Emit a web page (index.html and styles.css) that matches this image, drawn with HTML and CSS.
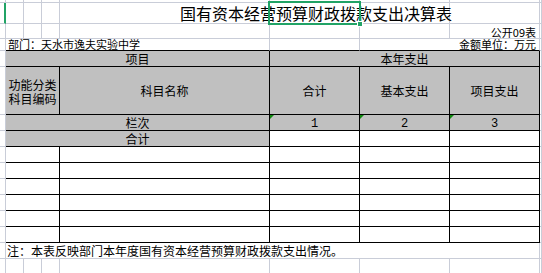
FILE: index.html
```html
<!DOCTYPE html>
<html lang="zh-CN">
<head>
<meta charset="utf-8">
<title>国有资本经营预算财政拨款支出决算表</title>
<link rel="stylesheet" href="styles.css">
</head>
<body>
<div class="sheet">
  <!-- r0 -->
  <div class="c"></div><div class="c"></div><div class="c"></div><div class="c"></div><div class="c"></div><div class="c"></div><div class="c"></div><div class="c"></div><div class="c"></div>
  <!-- r1 title -->
  <div class="c sel-row"></div><div class="c"></div><div class="c"></div><div class="c"></div>
  <div class="c s3 title">国有资本经营预算财政拨款支出决算表</div>
  <div class="c"></div><div class="c"></div>
  <!-- r2 -->
  <div class="c"></div><div class="c"></div><div class="c"></div><div class="c"></div><div class="c"></div><div class="c"></div><div class="c"></div>
  <div class="c small right">公开09表</div><div class="c"></div>
  <!-- r3 -->
  <div class="c"></div>
  <div class="c s4 small top-edge left">部门：天水市逸夫实验中学</div>
  <div class="c top-edge"></div>
  <div class="c s2 small top-edge right">金额单位：万元</div>
  <div class="c"></div>
  <!-- r4 header -->
  <div class="c"></div>
  <div class="t g s4 mid">项目</div>
  <div class="t g s3 mid">本年支出</div>
  <div class="c"></div>
  <!-- r5 header -->
  <div class="c"></div>
  <div class="t g s3 mid two">功能分类<br>科目编码</div>
  <div class="t g mid">科目名称</div>
  <div class="t g mid">合计</div>
  <div class="t g mid">基本支出</div>
  <div class="t g mid">项目支出</div>
  <div class="c"></div>
  <!-- r6 栏次 -->
  <div class="c"></div>
  <div class="t g s4 mid">栏次</div>
  <div class="t g mid num tri">1</div>
  <div class="t g mid num tri">2</div>
  <div class="t g mid num tri">3</div>
  <div class="c"></div>
  <!-- r7 合计 -->
  <div class="c"></div>
  <div class="t g s4 mid">合计</div>
  <div class="t"></div><div class="t"></div><div class="t"></div>
  <div class="c"></div>
  <!-- r8-r13 data rows -->
  <div class="c"></div><div class="t s3"></div><div class="t"></div><div class="t"></div><div class="t"></div><div class="t"></div><div class="c"></div>
  <div class="c"></div><div class="t s3"></div><div class="t"></div><div class="t"></div><div class="t"></div><div class="t"></div><div class="c"></div>
  <div class="c"></div><div class="t s3"></div><div class="t"></div><div class="t"></div><div class="t"></div><div class="t"></div><div class="c"></div>
  <div class="c"></div><div class="t s3"></div><div class="t"></div><div class="t"></div><div class="t"></div><div class="t"></div><div class="c"></div>
  <div class="c"></div><div class="t s3"></div><div class="t"></div><div class="t"></div><div class="t"></div><div class="t"></div><div class="c"></div>
  <div class="c"></div><div class="t s3"></div><div class="t"></div><div class="t"></div><div class="t"></div><div class="t"></div><div class="c"></div>
  <!-- r14 note -->
  <div class="c"></div>
  <div class="c s7 note left">注：本表反映部门本年度国有资本经营预算财政拨款支出情况。</div>
  <div class="c"></div>
  <!-- r15 -->
  <div class="c"></div><div class="c"></div><div class="c"></div><div class="c"></div><div class="c"></div><div class="c"></div><div class="c"></div><div class="c"></div><div class="c"></div>

  <div class="selection"><span class="handle"></span></div>
</div>
</body>
</html>
```
FILE: styles.css
```css
* { box-sizing: border-box; }
html, body { margin: 0; padding: 0; background: #fff; }
body {
  font-family: "Noto Sans CJK SC", "Liberation Sans", sans-serif;
  color: #000;
}
.sheet {
  position: relative;
  width: 542px;
  height: 273px;
  overflow: hidden;
  display: grid;
  grid-template-columns: 6px 18px 18px 18px 210px 90px 90px 90px 1fr;
  grid-template-rows: 3px 21px 15px 12px 16px 48px 16px 16px 16px 16px 16px 16px 16px 16px 16px 30px;
  background: #fff;
}
.c {
  border-right: 1px solid #c9cdd8;
  border-bottom: 1px solid #c9cdd8;
  font-size: 12px;
  white-space: nowrap;
  min-width: 0;
}
.t {
  position: relative;
  border-right: 1px solid #000;
  border-bottom: 1px solid #000;
  font-size: 12px;
  white-space: nowrap;
  min-width: 0;
  background: #fff;
}
.g { background: #c0c0c0; }
.s2 { grid-column: span 2; }
.s3 { grid-column: span 3; }
.s4 { grid-column: span 4; }
.s7 { grid-column: span 7; }
.sel-row { border-right: 2px solid #21a366; }
.title {
  font-size: 16px;
  line-height: 20px;
  padding-left: 120px;
  overflow: visible;
}
.small {
  font-size: 11px;
  line-height: 11px;
}
.right {
  display: flex;
  justify-content: flex-end;
  align-items: flex-end;
  padding-right: 3px;
}
.left {
  display: flex;
  align-items: flex-end;
  padding-left: 2px;
}
.top-edge { border-bottom-color: #000; }
.mid {
  display: flex;
  align-items: center;
  justify-content: center;
  line-height: 14px;
  padding-top: 1px;
}
.two { text-align: center; line-height: 14px; padding-top: 2px; }
.num { font-family: "Liberation Mono", monospace; font-size: 12px; padding-top: 3px; }
.tri::before {
  content: "";
  position: absolute;
  top: 0;
  left: 0;
  border-top: 4px solid #108a10;
  border-right: 4px solid transparent;
}
.note {
  font-size: 12px;
  line-height: 14px;
  padding-left: 1px;
}
.selection {
  position: absolute;
  left: 268px;
  top: 1px;
  width: 93px;
  height: 24px;
  border: 2px solid #21a366;
  pointer-events: none;
}
.handle {
  position: absolute;
  right: -4px;
  bottom: -4px;
  width: 6px;
  height: 6px;
  background: #21a366;
  border: 1px solid #fff;
}
```
